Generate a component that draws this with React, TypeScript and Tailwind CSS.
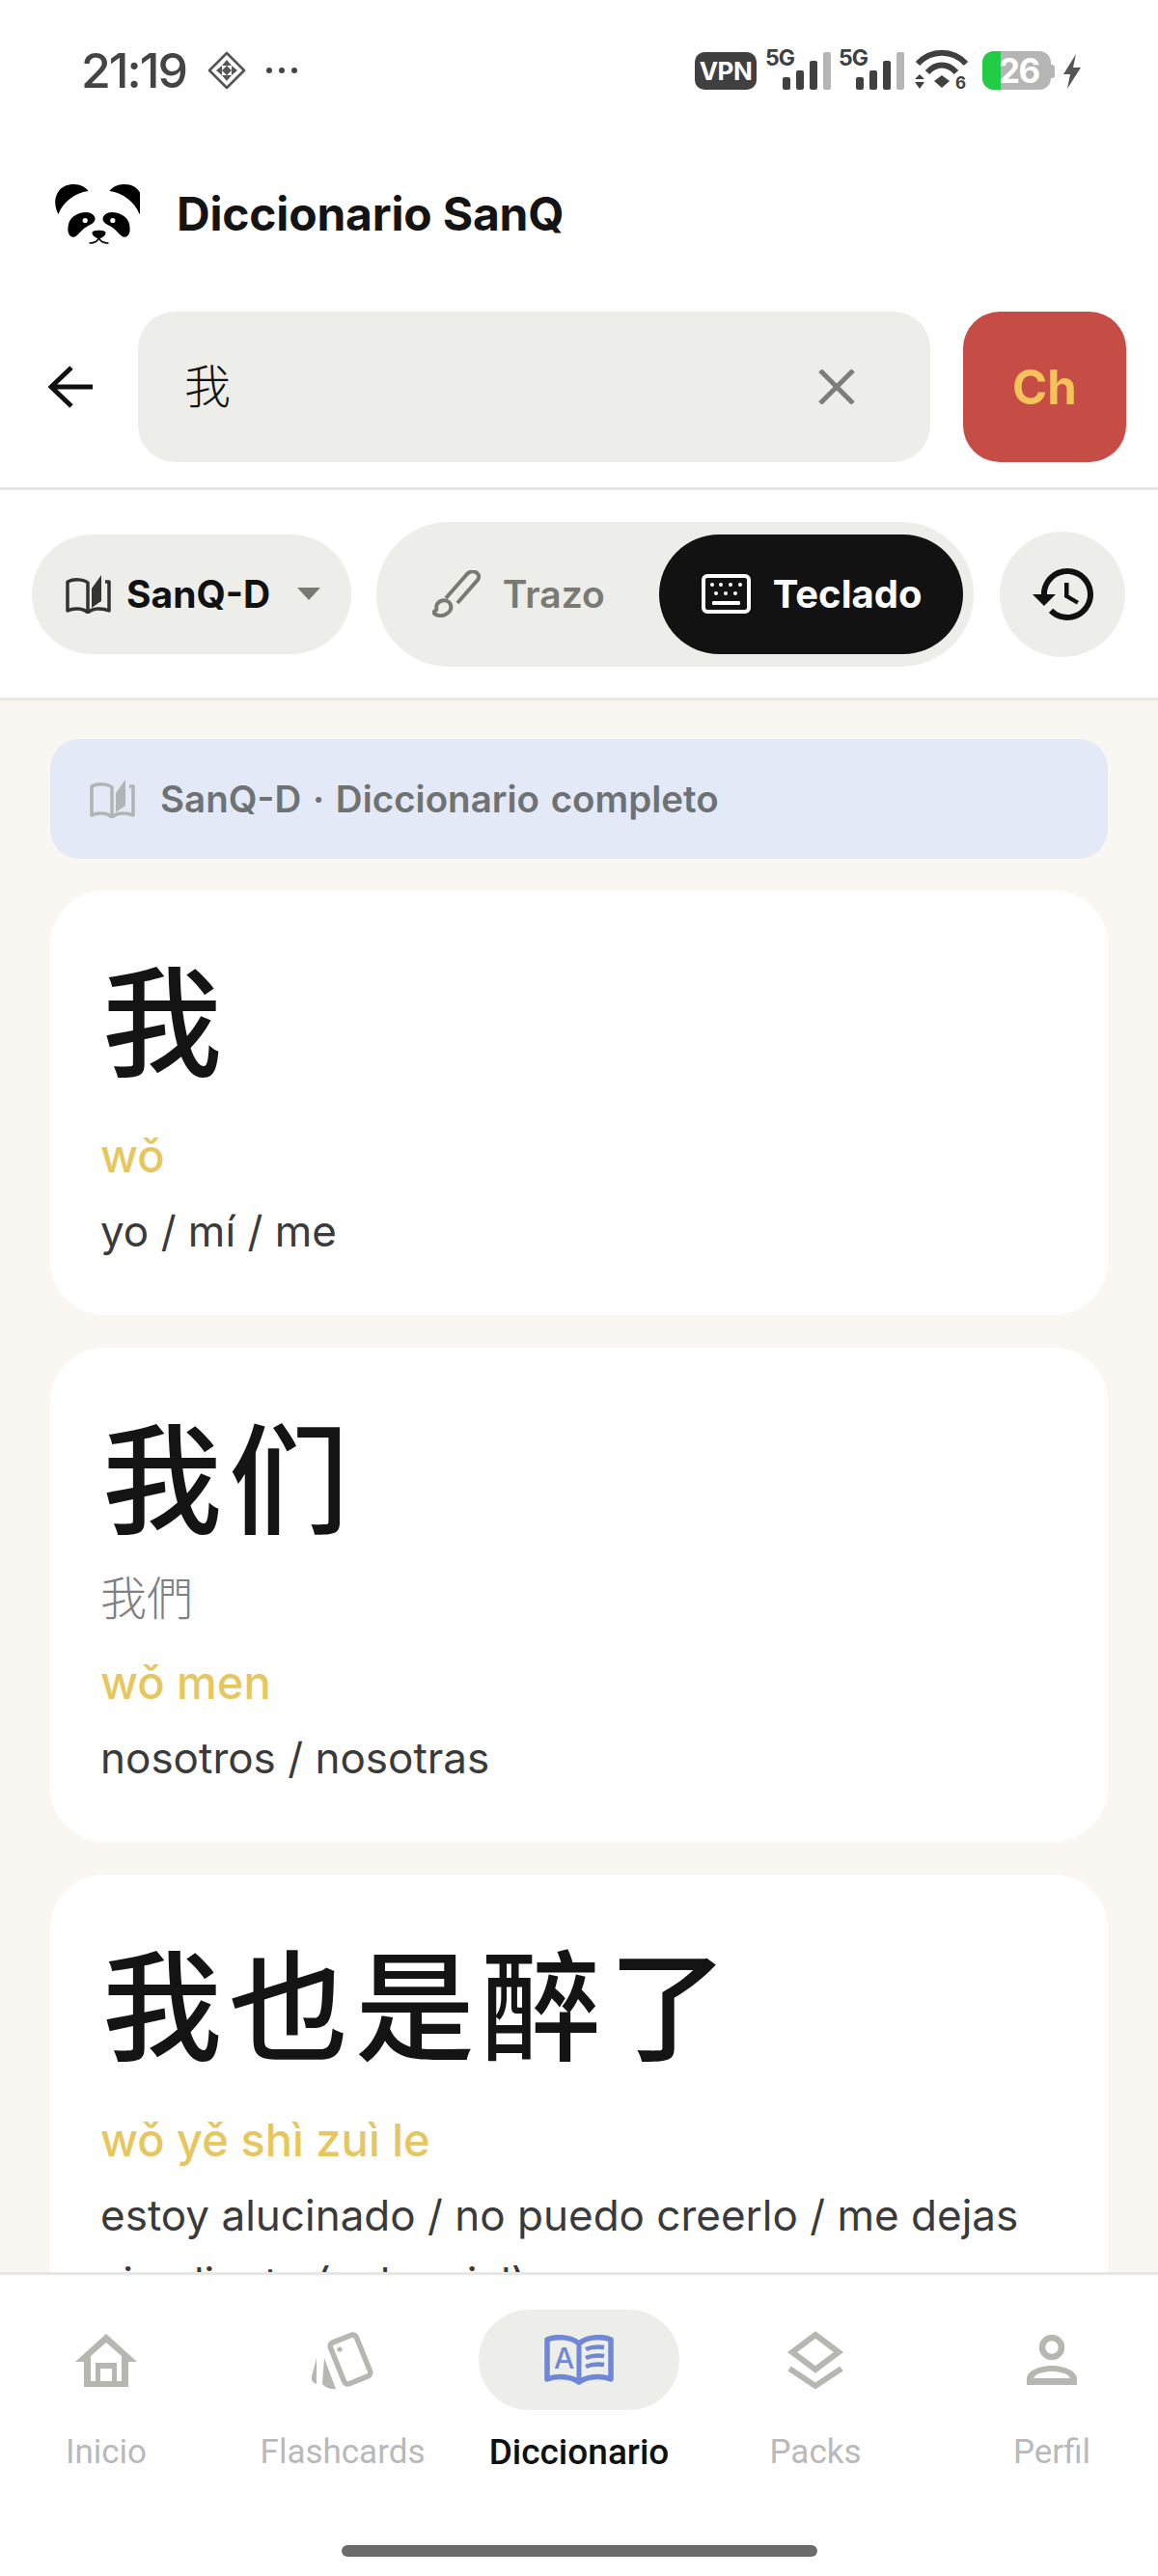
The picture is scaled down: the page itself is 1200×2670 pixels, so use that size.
import React from "react";

const G = "#b5b7b0";

function BookHalf({ c1, c2, className }: { c1: string; c2: string; className?: string }) {
  return (
    <svg viewBox="0 0 47 40" className={className} fill="none">
      <path d="M2 37V7C8 4 18 4 23 8V39C18 34 8 34 2 37Z" stroke={c1} strokeWidth="3.5" strokeLinejoin="round" />
      <path d="M27 34V14L37 0V27Z" fill={c2} />
      <path d="M41 7H45V37C38 34 28 34 23 39" stroke={c1} strokeWidth="3.5" strokeLinejoin="round" />
    </svg>
  );
}

function Panda() {
  const ear = "M19 52C12 40 16 21 35 21C42 21 47 24 50 28C36 30 24 39 19 52Z";
  const eye = "M29 66C29 56 38 50 48 50C54 50 57 54 57 57C57 60 54 62 50 64C44 67 41 72 37 75C32 78 28 72 29 66Z";
  return (
    <svg viewBox="17 21 85 62" className="h-[62px] w-[88px]">
      <path d={ear} fill="#000" />
      <path d={ear} fill="#000" transform="matrix(-1 0 0 1 122 0)" />
      <path d={eye} fill="#000" />
      <path d={eye} fill="#000" transform="matrix(-1 0 0 1 122 0)" />
      <circle cx="46.7" cy="58.5" r="2.6" fill="#fff" />
      <circle cx="75.3" cy="58.5" r="2.6" fill="#fff" />
      <path d="M54 71C54 68 68 68 68 71C68 75 63 77 61 77C59 77 54 75 54 71Z" fill="#000" />
      <path d="M51 82C56 82 60 81 61 76C62 81 66 82 71 82" stroke="#000" strokeWidth="1.5" fill="none" />
    </svg>
  );
}

function Signal() {
  return (
    <div className="relative h-[44px] w-[68px]">
      <span className="absolute left-0 top-0 text-[23px] font-bold leading-[23px] tracking-[-1px] text-[#404040]">5G</span>
      <div className="absolute bottom-0 right-0 flex items-end gap-[6px]">
        <div className="h-[13px] w-[8px] rounded-[2px] bg-[#404040]" />
        <div className="h-[20px] w-[8px] rounded-[2px] bg-[#404040]" />
        <div className="h-[30px] w-[8px] rounded-[2px] bg-[#404040]" />
        <div className="h-[39px] w-[8px] rounded-[2px] bg-[#b5b5b5]" />
      </div>
    </div>
  );
}

function StatusBar() {
  return (
    <div className="flex h-[146px] items-center justify-between pl-[84px] pr-[79px]">
      <div className="flex items-center">
        <span className="w-[131px] text-[50px] font-medium leading-none tracking-[-2px] text-[#444444]">21:19</span>
        <svg viewBox="0 0 40 40" className="h-[40px] w-[40px]" fill="none">
          <path d="M20 2L38 20L20 38L2 20Z" stroke="#555" strokeWidth="2.6" strokeLinejoin="round" />
          <path d="M20 9L25 15H15Z M9 20L15 15V25Z M31 20L25 15V25Z M20 31L15 25H25Z M20 15L25 20L20 25L15 20Z" fill="#555" fillRule="evenodd" />
        </svg>
        <div className="ml-[21px] flex gap-[7px]">
          <div className="h-[6px] w-[6px] rounded-full bg-[#444]" />
          <div className="h-[6px] w-[6px] rounded-full bg-[#444]" />
          <div className="h-[6px] w-[6px] rounded-full bg-[#444]" />
        </div>
      </div>
      <div className="mb-[5px] flex items-end">
        <div className="flex h-[39px] w-[64px] items-center justify-center rounded-[10px] bg-[#404040] text-[26px] font-bold tracking-[-0.5px] text-white">VPN</div>
        <div className="ml-[9px]"><Signal /></div>
        <div className="ml-[8px]"><Signal /></div>
        <svg viewBox="0 0 56 42" className="ml-[11px] h-[42px] w-[56px]" fill="none">
          <path d="M3 15C17 0 39 0 53 15" stroke="#404040" strokeWidth="6" />
          <path d="M13 24C22 14 34 14 43 24" stroke="#404040" strokeWidth="6" />
          <path d="M20 33L28 27L36 33L28 40Z" fill="#404040" />
          <path d="M5 26L10 31H0Z M5 41L10 34H0Z" fill="#404040" />
          <text x="42" y="41" fontSize="17" fontWeight="700" fill="#404040">6</text>
        </svg>
        <div className="relative ml-[14px] flex h-[40px] w-[71px] overflow-hidden rounded-[12px] bg-[#b5b5b5]">
          <div className="h-full w-[19px] bg-[#22cc44]" />
          <span className="absolute left-[17px] top-0 text-[35px] font-bold leading-[40px] tracking-[-1.5px] text-white">26</span>
        </div>
        <div className="mb-[12px] h-[14px] w-[4px] rounded-r-[3px] bg-[#b5b5b5]" />
        <svg viewBox="0 0 20 36" className="mb-[1px] ml-[8px] h-[36px] w-[20px]">
          <path d="M14 0L1 21H8L5 36L19 14H11Z" fill="#555" />
        </svg>
      </div>
    </div>
  );
}

function Header() {
  return (
    <div className="flex h-[152px] items-center pl-[57px]">
      <Panda />
      <span className="ml-[38px] text-[48px] font-bold leading-none tracking-[-0.2px] text-[#141414]">Diccionario SanQ</span>
    </div>
  );
}

function SearchRow() {
  return (
    <div className="flex items-center border-b-[3px] border-[#e8e8e3] pb-[26px] pl-[50px] pr-[33px] pt-[25px]">
      <svg viewBox="0 0 46 44" className="h-[44px] w-[46px]" fill="none">
        <path d="M46 22H4M24 2L3 22L24 42" stroke="#111" strokeWidth="5" />
      </svg>
      <div className="ml-[47px] flex h-[156px] w-[821px] items-center justify-between rounded-[38px] bg-[#edede9] pl-[48px] pr-[78px]">
        <span className="text-[48px] font-light leading-none text-[#111]">我</span>
        <svg viewBox="0 0 38 36" className="h-[36px] w-[38px]" fill="none">
          <path d="M2 1L36 35M36 1L2 35" stroke="#7d7d7a" strokeWidth="5" />
        </svg>
      </div>
      <div className="ml-[34px] flex h-[156px] w-[169px] items-center justify-center rounded-[38px] bg-[#c64d45] text-[49px] font-bold leading-none text-[#f5c35b]">Ch</div>
    </div>
  );
}

function Toolbar() {
  return (
    <div className="flex h-[218px] items-center border-b-[3px] border-[#ebe8e2] pl-[33px] pr-[34px]">
      <div className="flex h-[124px] w-[331px] items-center rounded-full bg-[#edede9] pl-[35px]">
        <BookHalf c1="#333" c2="#333" className="h-[40px] w-[47px]" />
        <span className="ml-[16px] text-[39px] font-bold leading-none text-[#111]">SanQ-D</span>
        <div className="ml-[28px] h-0 w-0 border-x-[12px] border-t-[13px] border-x-transparent border-t-[#7a7a75]" />
      </div>
      <div className="ml-[26px] flex h-[150px] w-[620px] items-center rounded-full bg-[#edede9] pl-[58px]">
        <svg viewBox="0 0 50 49" className="h-[49px] w-[50px]" fill="none" stroke="#7a7a75" strokeWidth="4">
          <path d="M14 29L36 4Q40 0 45 2Q50 5 47 10L26 34" />
          <path d="M5 35C9 30 17 30 19 36C21 42 14 48 7 47C2 46 0 44 3 42C6 41 3 38 5 35Z" />
        </svg>
        <span className="ml-[23px] w-[162px] text-[39px] font-semibold leading-none text-[#7a7a75]">Trazo</span>
        <div className="flex h-[124px] w-[315px] items-center rounded-full bg-[#131212] pl-[44px]">
          <svg viewBox="0 0 51 41" className="h-[41px] w-[51px]" fill="none">
            <rect x="2" y="2" width="47" height="37" rx="4" stroke="#fff" strokeWidth="4" />
            <g fill="#fff">
              <circle cx="11" cy="11" r="2" /><circle cx="20" cy="11" r="2" /><circle cx="30" cy="11" r="2" /><circle cx="40" cy="11" r="2" />
              <circle cx="15" cy="20" r="2" /><circle cx="25" cy="20" r="2" /><circle cx="35" cy="20" r="2" />
              <rect x="11" y="28" width="29" height="4" rx="1" />
            </g>
          </svg>
          <span className="ml-[23px] text-[40px] font-bold leading-none text-white">Teclado</span>
        </div>
      </div>
      <div className="ml-[27px] flex h-[130px] w-[130px] items-center justify-center rounded-full bg-[#edede9]">
        <svg viewBox="1 3 21 18" className="h-[54px] w-[63px]" fill="#111">
          <path d="M13 3c-4.97 0-9 4.03-9 9H1l3.89 3.89.07.14L9 12H6c0-3.87 3.13-7 7-7s7 3.13 7 7-3.13 7-7 7c-1.93 0-3.68-.79-4.94-2.06l-1.42 1.42C8.27 19.99 10.51 21 13 21c4.97 0 9-4.03 9-9s-4.03-9-9-9zm-1 5v5l4.28 2.54.72-1.21-3.5-2.08V8H12z" />
        </svg>
      </div>
    </div>
  );
}

function Entry({ han, trad, pinyin, meaning }: { han: string; trad?: string; pinyin: string; meaning: string }) {
  return (
    <div className="rounded-[56px] bg-white pb-[52px] pl-[52px] pr-[52px] pt-[62px]">
      <div className="mb-[10px] h-[152px] pl-[2px] text-[124px] font-medium leading-[152px] tracking-[7px] text-[#141414]">{han}</div>
      {trad && <div className="h-[72px] text-[48px] font-light leading-[72px] text-[#808080]">{trad}</div>}
      <div className={trad ? "mt-[21px] text-[47px] font-medium leading-[60px] text-[#e6c75f]" : "mt-[31px] text-[47px] font-medium leading-[60px] text-[#e6c75f]"}>{pinyin}</div>
      <div className="mt-[13px] text-[44px] leading-[70px] text-[#3a3a3a]">{meaning}</div>
    </div>
  );
}

function Main() {
  return (
    <div className="min-h-0 flex-1 overflow-hidden bg-[#faf7f3] px-[52px] pt-[40px]">
      <div className="flex h-[124px] items-center rounded-[30px] bg-[#e4e9f7] pl-[41px]">
        <BookHalf c1="#b0b4b3" c2="#b0b4b3" className="h-[40px] w-[47px]" />
        <span className="ml-[26px] text-[38.5px] font-semibold leading-none text-[#6f7272] [word-spacing:2px]">SanQ-D · Diccionario completo</span>
      </div>
      <div className="mt-[33px] flex flex-col gap-[34px]">
        <Entry han="我" pinyin="wǒ" meaning="yo / mí / me" />
        <Entry han="我们" trad="我們" pinyin="wǒ men" meaning="nosotros / nosotras" />
        <Entry han="我也是醉了" pinyin="wǒ yě shì zuì le" meaning="estoy alucinado / no puedo creerlo / me dejas sin aliento (coloquial)" />
      </div>
    </div>
  );
}

function NavItem({ label, active, icon }: { label: string; active?: boolean; icon: React.ReactNode }) {
  return (
    <div className="flex w-[160px] flex-col items-center">
      <div className={active ? "flex h-[104px] w-[208px] shrink-0 items-center justify-center rounded-full bg-[#edede9]" : "flex h-[104px] items-center justify-center"}>{icon}</div>
      <span className={active ? "mt-[22px] whitespace-nowrap font-['Roboto'] text-[37px] font-medium leading-[44px] text-[#111]" : "mt-[22px] whitespace-nowrap font-['Roboto'] text-[35px] leading-[44px] text-[#b9b9b9]"}>{label}</span>
    </div>
  );
}

function Nav() {
  return (
    <div className="relative h-[315px] shrink-0 border-t-[3px] border-[#e8e8e3] bg-white">
      <div className="flex justify-between px-[30px] pt-[36px]">
        <NavItem
          label="Inicio"
          icon={
            <svg viewBox="0 0 64 55" className="h-[55px] w-[64px]">
              <path d="M32 0L64 29H55V55H9V29H0Z" fill={G} />
              <path d="M32 9L48 23V49H16V23Z" fill="#fff" />
              <path d="M21 55V30H43V55H38V36H26V55Z" fill={G} />
              <rect x="16" y="49" width="5" height="6" fill={G} />
              <rect x="43" y="49" width="5" height="6" fill={G} />
            </svg>
          }
        />
        <NavItem
          label="Flashcards"
          icon={
            <svg viewBox="0 0 76 70" className="h-[70px] w-[76px]" fill="none">
              <rect x="31.5" y="11.5" width="29" height="46" rx="4" stroke={G} strokeWidth="5.5" transform="rotate(-22 46 34.5)" />
              <circle cx="35" cy="24" r="2.6" fill={G} />
              <path d="M11 33L6 52Q5 58 11 60Z" fill={G} />
              <path d="M19 33L17 60Q22 66 31 65Z" fill={G} />
            </svg>
          }
        />
        <NavItem
          label="Diccionario"
          active
          icon={
            <svg viewBox="0 0 72 52" className="h-[52px] w-[72px]" fill="none">
              <path d="M36 9C28 2 12 1 3 5V46C13 42 28 43 36 49C44 43 59 42 69 46V5C60 1 44 2 36 9Z" stroke="#6f87d6" strokeWidth="5.5" strokeLinejoin="round" />
              <path d="M36 9V49" stroke="#6f87d6" strokeWidth="5" />
              <text x="10" y="35" fontSize="30" fontWeight="500" fill="#6f87d6">A</text>
              <path d="M43 15C50 12 56 12 62 13M43 24C50 21 56 21 62 22M43 33C50 30 56 30 62 31" stroke="#6f87d6" strokeWidth="4.5" />
            </svg>
          }
        />
        <NavItem
          label="Packs"
          icon={
            <svg viewBox="0 0 58 61" className="h-[61px] w-[58px]" fill="none" stroke={G} strokeWidth="6">
              <path d="M29 4L53 22L29 40L5 22Z" />
              <path d="M2 39L29 57L56 39" />
            </svg>
          }
        />
        <NavItem
          label="Perfil"
          icon={
            <svg viewBox="0 0 52 52" className="h-[52px] w-[52px]" fill="none">
              <circle cx="26" cy="13" r="10" stroke={G} strokeWidth="6.5" />
              <path fillRule="evenodd" d="M0 52V46C0 37 14 32 26 32C38 32 52 37 52 46V52ZM7 45H45C43 40 34 38 26 38C18 38 9 40 7 45Z" fill={G} />
            </svg>
          }
        />
      </div>
      <div className="absolute bottom-[20px] left-[354px] h-[12px] w-[493px] rounded-full bg-[#6b6b6b]" />
    </div>
  );
}

export default function App() {
  return (
    <div className="flex h-[2670px] w-[1200px] flex-col overflow-hidden bg-white font-['Inter','Noto_Sans_CJK_SC',sans-serif]">
      <StatusBar />
      <Header />
      <SearchRow />
      <Toolbar />
      <Main />
      <Nav />
    </div>
  );
}
